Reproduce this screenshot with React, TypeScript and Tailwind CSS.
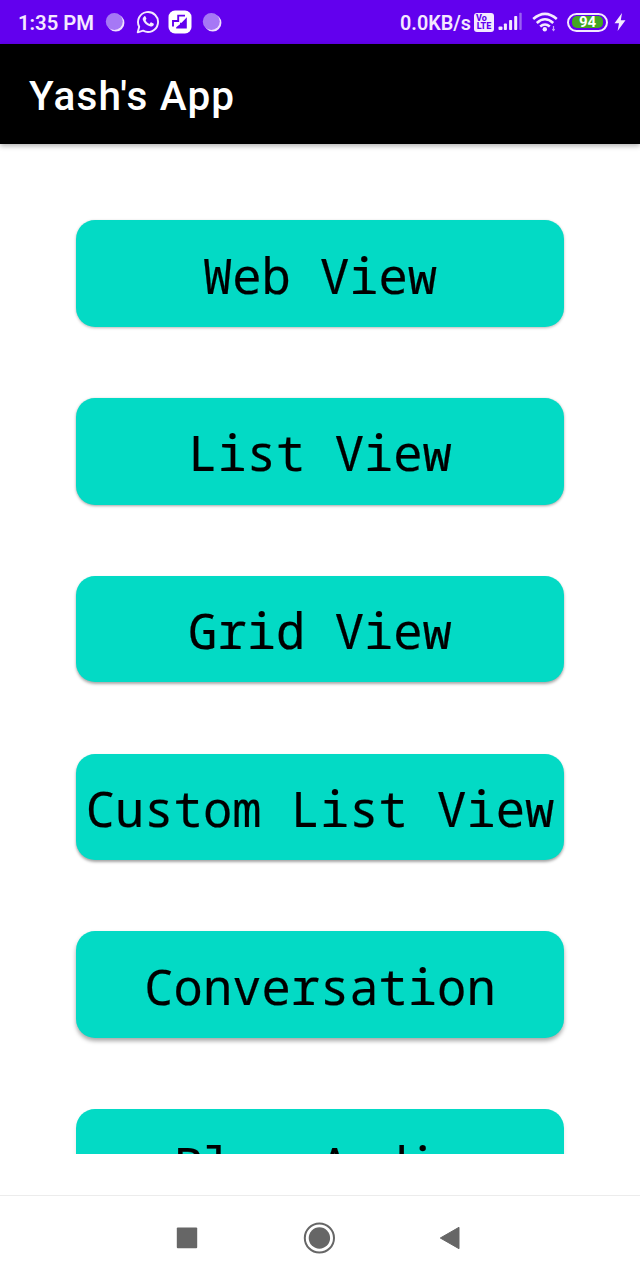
const items = [
  { label: 'Web View', shadow: 'shadow-[0_1px_3px_rgba(0,0,0,0.28)]' },
  { label: 'List View', shadow: 'shadow-[0_1px_3px_rgba(0,0,0,0.36)]' },
  { label: 'Grid View', shadow: 'shadow-[0_2px_3px_rgba(0,0,0,0.34)]' },
  { label: 'Custom List View', shadow: 'shadow-[0_2px_3px_rgba(0,0,0,0.36)]' },
  { label: 'Conversation', shadow: 'shadow-[0_3px_4px_rgba(0,0,0,0.34)]' },
  { label: 'Play Audio', shadow: 'shadow-[0_3px_4px_rgba(0,0,0,0.1)]' },
];

function Orb() {
  return (
    <svg className="h-5 w-5 shrink-0" viewBox="0 0 20 20">
      <circle cx="10.8" cy="10.9" r="8.6" fill="#f0dfff" />
      <circle cx="9.3" cy="9.5" r="8.5" fill="#a678f5" />
    </svg>
  );
}

function WhatsApp() {
  return (
    <svg className="ml-[11px] h-6 w-6 shrink-0" viewBox="0 0 24 24">
      <path d="M1.7 22.3 3.2 16.7A10 10 0 1 1 7.1 20.7Z" fill="none" stroke="#f4e9ff" strokeWidth="1.9" strokeLinejoin="round" />
      <path
        d="M8.2 6.4c.6-.5 1.1-.3 1.4.3l.8 1.9c.1.4 0 .7-.8 1.6.8 1.7 2.1 2.9 3.9 3.7l1.1-1.3c.3-.3.5-.3.8-.2l2.1 1c.4.2.4.5.3 1-.4 1.5-1.9 2.2-3.2 2-3.8-.8-6.8-3.6-7.8-6.6-.4-1.4.3-2.7 1.4-3.4Z"
        fill="#f4e9ff"
      />
    </svg>
  );
}

function StepsBadge() {
  return (
    <svg className="ml-[8px] h-6 w-6 shrink-0" viewBox="0 0 24 24">
      <rect x="0.5" y="0.5" width="23" height="23" rx="6.5" fill="#fff" />
      <path d="M5 16.5V11H10.2V5.6H17" fill="none" stroke="#6200ee" strokeWidth="1.9" />
      <path d="M18.8 7.2V18.6H8.2V17.2L12 14.2V12.8H13.6Z" fill="#6200ee" />
    </svg>
  );
}

function Signal() {
  return (
    <svg className="ml-[4px] h-5 w-6 shrink-0" viewBox="0 0 24 20" fill="#f4e9ff">
      <rect x="0.5" y="14.5" width="4" height="3.5" rx="1" />
      <rect x="5.9" y="11.5" width="3" height="6.5" rx="0.8" />
      <rect x="11.1" y="8" width="3" height="10" rx="0.8" />
      <rect x="16.2" y="4" width="3" height="14" rx="0.8" />
      <rect x="21.3" y="0.8" width="2.4" height="17.2" rx="0.8" fill="#9a60f3" />
    </svg>
  );
}

function Wifi() {
  return (
    <svg className="ml-[10px] h-5 w-[26px] shrink-0" viewBox="0 0 26 20">
      <g fill="none" stroke="#f4e9ff" strokeWidth="2.6">
        <path d="M1.2 7Q13 -3.3 24.8 7" />
        <path d="M4.8 11Q13 3.5 21.2 11" />
        <path d="M8.2 14.6Q13 10.4 17.8 14.6" />
      </g>
      <circle cx="12.8" cy="17.2" r="2.2" fill="#f4e9ff" />
      <path d="M21.5 14v4.5M20.4 17.2l1.1 1.3 1.1-1.3" fill="none" stroke="#c8a2fb" strokeWidth="1.2" />
    </svg>
  );
}

function StatusBar() {
  return (
    <div className="flex h-11 shrink-0 items-center bg-[#6200ee] text-[20.3px] font-semibold leading-none text-[#f4e9ff]">
      <span className="ml-[18px] w-[77px] whitespace-nowrap pt-[3px]">1:35 PM</span>
      <div className="ml-[10px] flex items-center">
        <Orb />
        <WhatsApp />
        <StepsBadge />
        <div className="ml-[10px] flex">
          <Orb />
        </div>
      </div>
      <span className="ml-auto w-[69px] whitespace-nowrap pt-[3px] text-[19.8px]">0.0KB/s</span>
      <div className="ml-[5px] flex h-[19px] w-5 shrink-0 flex-col items-center justify-center rounded-[3px] bg-[#f4e9ff] text-[9px] font-extrabold leading-[8.5px] text-[#6200ee]">
        <span className="w-full pl-[2px]">Vo</span>
        <span>LTE</span>
      </div>
      <Signal />
      <Wifi />
      <div className="ml-[9px] flex h-[19px] w-[41px] shrink-0 items-center justify-center rounded-full border-2 border-[#f4e9ff]">
        <span className="flex h-[12px] w-[31px] items-center justify-center rounded-[5px] bg-[#43a623] text-[15px] font-bold leading-none text-white">
          94
        </span>
      </div>
      <svg className="ml-[6px] mr-[14px] h-[18px] w-3 shrink-0" viewBox="0 0 12 18" fill="#f4e9ff">
        <path d="M8 0 0.5 10.3H5L3.6 18 11.5 7.2H6.8Z" />
      </svg>
    </div>
  );
}

function NavBar() {
  return (
    <nav className="flex h-[85px] shrink-0 items-center border-t border-[#ececec] bg-white pb-px">
      <svg className="ml-[176px] h-[22px] w-[22px]" viewBox="0 0 22 22">
        <rect x="0.8" y="0.6" width="20.4" height="20.6" rx="1" fill="#666" />
      </svg>
      <svg className="ml-[105px] h-8 w-8" viewBox="0 0 32 32">
        <circle cx="16.4" cy="16" r="14.6" fill="none" stroke="#666" strokeWidth="2" />
        <circle cx="16.4" cy="16" r="10.7" fill="#666" />
      </svg>
      <svg className="ml-[104px] h-6 w-[22px]" viewBox="0 0 22 24">
        <path d="M1.3 12 20 1.3V22.7Z" fill="#666" stroke="#666" strokeWidth="1" strokeLinejoin="round" />
      </svg>
    </nav>
  );
}

export default function App() {
  return (
    <div className="flex h-[1280px] w-[640px] flex-col overflow-hidden bg-white font-['Roboto',sans-serif]">
      <StatusBar />
      <header className="z-10 flex h-[100px] shrink-0 items-center bg-black pl-[29px] pt-[5px] shadow-[0_2px_5px_rgba(0,0,0,0.3)]">
        <h1 className="whitespace-nowrap text-[40.5px] font-medium leading-none tracking-[1.15px] text-white">Yash's App</h1>
      </header>
      <main className="flex h-[1010px] shrink-0 flex-col items-center gap-[71.2px] overflow-hidden pt-[76.3px]">
        {items.map((item) => (
          <button
            key={item.label}
            className={`flex h-[106.6px] w-[487.5px] shrink-0 items-center justify-center whitespace-pre rounded-[19px] bg-[#03dac5] pt-[3px] font-['Noto_Sans_Mono','DejaVu_Sans_Mono',monospace] text-[48.8px] leading-none text-black [-webkit-text-stroke:0.2px_black] ${item.shadow}`}
          >
            {item.label}
          </button>
        ))}
      </main>
      <div className="grow bg-white" />
      <NavBar />
    </div>
  );
}
